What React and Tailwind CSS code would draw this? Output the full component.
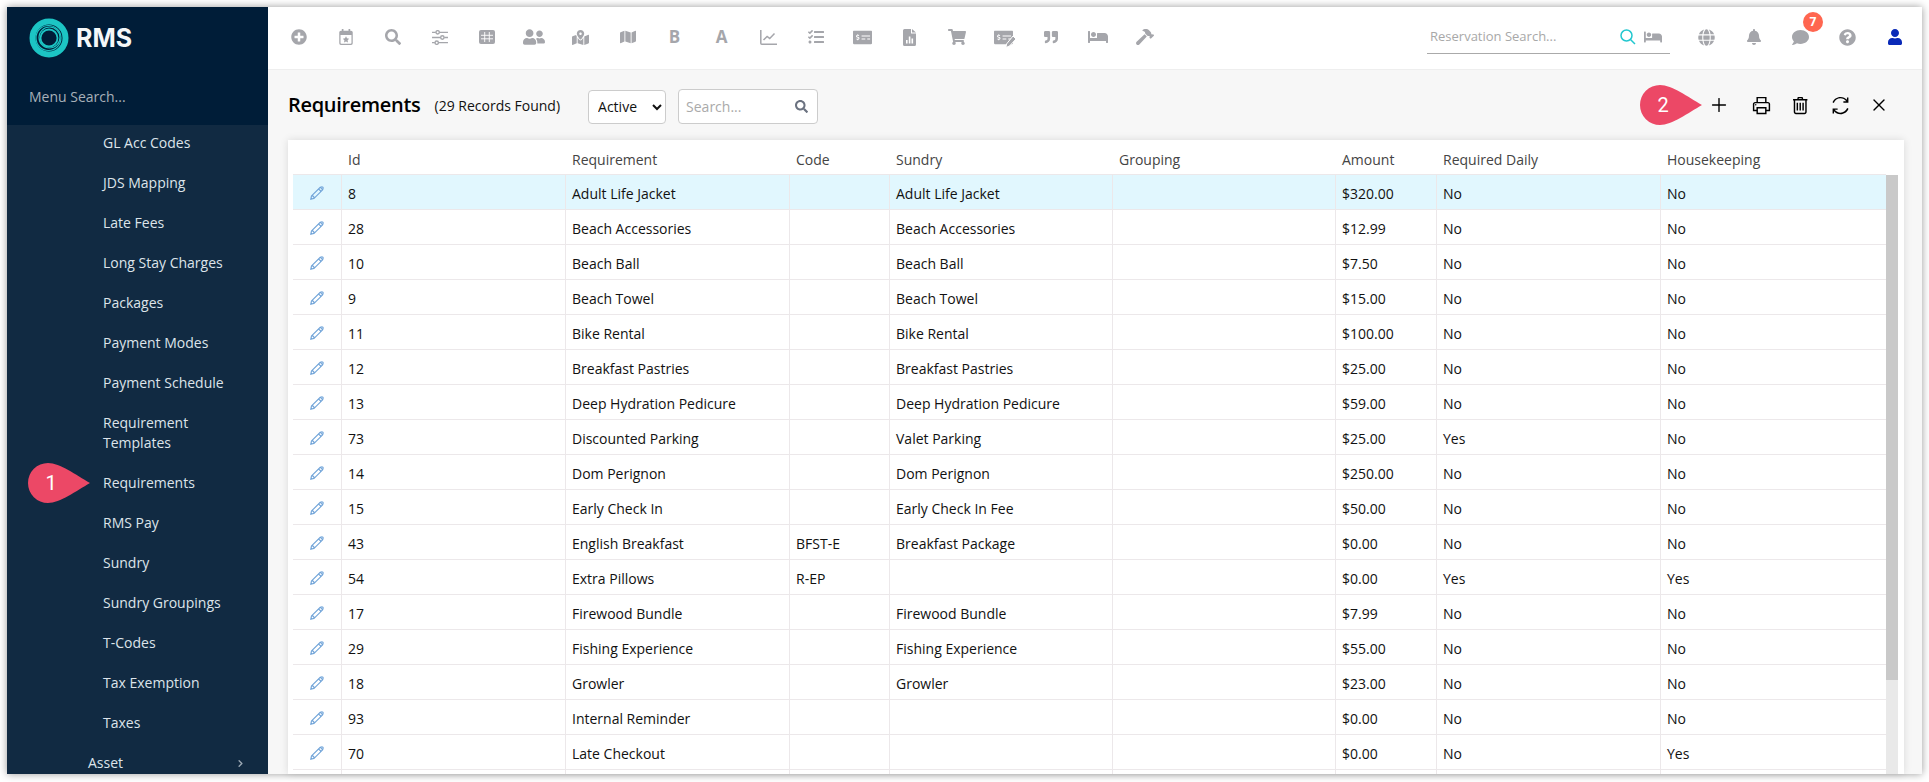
import { Plus, X, ChevronRight } from "lucide-react";
import {
  FaPlusCircle, FaSearch, FaUserFriends, FaMapMarkedAlt, FaMap, FaTasks, FaMoneyCheckAlt,
  FaShoppingCart, FaQuoteRight, FaBed, FaHammer, FaGlobe, FaBell, FaComment, FaQuestionCircle, FaUser,
} from "react-icons/fa";
import { LiaPencilAltSolid, LiaPrintSolid, LiaTrashAltSolid, LiaSyncSolid } from "react-icons/lia";

const menuItems = [
  "GL Acc Codes", "JDS Mapping", "Late Fees", "Long Stay Charges", "Packages", "Payment Modes", "Payment Schedule",
  "Requirement Templates", "Requirements", "RMS Pay", "Sundry", "Sundry Groupings", "T-Codes", "Tax Exemption", "Taxes",
];

const rows = [
  ["8", "Adult Life Jacket", "", "Adult Life Jacket", "$320.00", "No", "No"],
  ["28", "Beach Accessories", "", "Beach Accessories", "$12.99", "No", "No"],
  ["10", "Beach Ball", "", "Beach Ball", "$7.50", "No", "No"],
  ["9", "Beach Towel", "", "Beach Towel", "$15.00", "No", "No"],
  ["11", "Bike Rental", "", "Bike Rental", "$100.00", "No", "No"],
  ["12", "Breakfast Pastries", "", "Breakfast Pastries", "$25.00", "No", "No"],
  ["13", "Deep Hydration Pedicure", "", "Deep Hydration Pedicure", "$59.00", "No", "No"],
  ["73", "Discounted Parking", "", "Valet Parking", "$25.00", "Yes", "No"],
  ["14", "Dom Perignon", "", "Dom Perignon", "$250.00", "No", "No"],
  ["15", "Early Check In", "", "Early Check In Fee", "$50.00", "No", "No"],
  ["43", "English Breakfast", "BFST-E", "Breakfast Package", "$0.00", "No", "No"],
  ["54", "Extra Pillows", "R-EP", "", "$0.00", "Yes", "Yes"],
  ["17", "Firewood Bundle", "", "Firewood Bundle", "$7.99", "No", "No"],
  ["29", "Fishing Experience", "", "Fishing Experience", "$55.00", "No", "No"],
  ["18", "Growler", "", "Growler", "$23.00", "No", "No"],
  ["93", "Internal Reminder", "", "", "$0.00", "No", "No"],
  ["70", "Late Checkout", "", "", "$0.00", "No", "Yes"],
  ["", "", "", "", "", "", ""],
];

function CalendarStar() {
  return (
    <svg width="14" height="16" viewBox="0 0 16 19" fill="#a5a6ab">
      <path d="M3 0h2v3H3zM11 0h2v3h-2z" />
      <path fillRule="evenodd" d="M2 2h12a2 2 0 0 1 2 2v13a2 2 0 0 1-2 2H2a2 2 0 0 1-2-2V4a2 2 0 0 1 2-2zm-.5 5v9.500c0 .6.4 1 1 1h11c.6 0 1-.4 1-1V7z" />
      <path d="M8 8.700l1.200 2.400 2.600.4-1.900 1.800.5 2.600L8 14.700l-2.400 1.200.5-2.600-1.900-1.800 2.600-.4z" />
    </svg>
  );
}

function SlidersIcon() {
  return (
    <svg width="16" height="15" viewBox="0 0 17 16" fill="none" stroke="#a5a6ab" strokeWidth="1.500">
      <path d="M0 2.500h4M8 2.500h9M0 8h9M13 8h4M0 13.500h3M7 13.500h10" />
      <circle cx="6" cy="2.500" r="1.800" />
      <circle cx="11" cy="8" r="1.800" />
      <circle cx="5" cy="13.500" r="1.800" />
    </svg>
  );
}

function GridIcon() {
  return (
    <svg width="16" height="14" viewBox="0 0 16 14">
      <rect width="16" height="14" rx="2" fill="#a5a6ab" />
      <path d="M5.700 2v10M10.300 2v10M2 5.300h12M2 8.800h12" stroke="#fff" strokeWidth="0.900" />
    </svg>
  );
}

function ChartIcon() {
  return (
    <svg width="17" height="15" viewBox="0 0 17 15" fill="none" stroke="#a5a6ab" strokeWidth="1.500">
      <path d="M.8 0v13.200c0 .6.4 1 1 1H17" />
      <path d="M3.500 10l3.600-3.600 2.600 2L14.500 3.500" />
    </svg>
  );
}

function FileChart() {
  return (
    <svg width="13" height="17" viewBox="0 0 13 17">
      <path d="M1.500 0H8v4.500h5v11a1.500 1.500 0 0 1-1.500 1.500h-10A1.500 1.500 0 0 1 0 15.500V1.500A1.500 1.500 0 0 1 1.500 0zM9 0l4 3.500H9z" fill="#a5a6ab" />
      <path d="M3 11h1.600v3.500H3zM5.800 7.500h1.600v7H5.800zM8.500 9.500h1.600v5H8.500z" fill="#fff" />
    </svg>
  );
}

function CheckEdit() {
  return (
    <span className="relative flex">
      <FaMoneyCheckAlt size={19} color="#a5a6ab" />
      <svg className="absolute right-[-3px] bottom-[-1px]" width="11" height="12" viewBox="0 0 11 12">
        <path d="M8 0l3 3-6.500 7L1 11.500 1.500 8z" fill="#a5a6ab" stroke="#fff" strokeWidth="1" />
      </svg>
    </span>
  );
}

const gray = "#a5a6ab";
const toolbarIcons = [
  <FaPlusCircle size={16} color={gray} />,
  <CalendarStar />,
  <FaSearch size={16} color={gray} />,
  <SlidersIcon />,
  <GridIcon />,
  <FaUserFriends size={22} color={gray} />,
  <FaMapMarkedAlt size={17} color={gray} />,
  <FaMap size={16} color={gray} />,
  <span className="text-[17px] font-bold text-[#a5a6ab]">B</span>,
  <span className="text-[17px] font-bold text-[#a5a6ab]">A</span>,
  <ChartIcon />,
  <FaTasks size={16} color={gray} />,
  <FaMoneyCheckAlt size={19} color={gray} />,
  <FileChart />,
  <FaShoppingCart size={18} color={gray} />,
  <CheckEdit />,
  <FaQuoteRight size={14} color={gray} />,
  <FaBed size={20} color={gray} />,
  <FaHammer size={18} color={gray} />,
];

function Logo() {
  return (
    <svg width="40" height="40" viewBox="0 0 40 40" fill="none" stroke="#1cc5c4">
      <circle cx="20" cy="20" r="16.500" strokeWidth="6" />
      <circle cx="19.500" cy="20" r="12.500" strokeWidth="1.200" />
      <circle cx="20.500" cy="19.500" r="10.500" strokeWidth="1.200" />
      <circle cx="20" cy="20" r="8.500" strokeWidth="1.800" />
    </svg>
  );
}

function Callout({ label, className }) {
  return (
    <div className={`absolute h-[40px] w-[62px] ${className}`}>
      <svg width="62" height="40" viewBox="0 0 62 40">
        <path d="M20 0C32 0 48 12 62 20 48 28 32 40 20 40A20 20 0 0 1 20 0z" fill="#ec4866" />
      </svg>
      <span className="absolute left-0 top-0 w-[46px] text-center text-[20px] leading-[40px] font-['Roboto',sans-serif] text-white">{label}</span>
    </div>
  );
}

function Sidebar() {
  return (
    <aside className="flex w-[261px] shrink-0 flex-col overflow-hidden bg-[#112a42]">
      <div className="h-[118px] shrink-0 bg-[#001d38] pl-[22px]">
        <div className="flex items-center gap-[7px] pt-[11px]">
          <Logo />
          <span className="text-[25px] leading-[40px] font-bold font-['Inter',sans-serif] text-[#f4f7f8]">RMS</span>
        </div>
        <input
          placeholder="Menu Search..."
          className="mt-[29px] w-[220px] bg-transparent text-[14px] leading-[20px] text-white outline-none placeholder:text-[#a7b0b8]"
        />
      </div>
      <ul className="-mt-[2px] text-[14px] leading-[20px] text-[#dde4ea]">
        {menuItems.map((item) => (
          <li key={item} className="relative py-[10px] pl-[96px] pr-[40px]">
            {item}
            {item === "Requirements" && <Callout label="1" className="left-[21px] top-0" />}
          </li>
        ))}
        <li className="flex items-center justify-between py-[10px] pl-[81px] pr-[22px]">
          Asset
          <ChevronRight size={11} strokeWidth={3} color="#9aa7b3" />
        </li>
      </ul>
    </aside>
  );
}

function TopBar() {
  return (
    <header className="flex h-[63px] shrink-0 items-center border-b border-[#eeeeee] bg-white pb-[2px] pl-[7px] pr-[4px]">
      {toolbarIcons.map((icon, i) => (
        <div key={i} className="flex h-[30px] w-[47px] items-center justify-center">{icon}</div>
      ))}
      <div className="ml-auto flex h-[33px] w-[243px] items-center border-b border-[#aaaaaa] pl-[3px] pr-[8px]">
        <input
          placeholder="Reservation Search..."
          className="min-w-0 flex-1 bg-transparent text-[13px] outline-none placeholder:text-[#a8a8a8]"
        />
        <svg width="16" height="16" viewBox="0 0 16 16" fill="none" stroke="#22c7cf" strokeWidth="1.500">
          <circle cx="6.500" cy="6.500" r="5.500" />
          <path d="M10.500 10.500L15 15" />
        </svg>
        <FaBed size={18} color={gray} className="ml-[8px]" />
      </div>
      <div className="ml-[13px] flex items-center">
        <div className="flex w-[47px] justify-center"><FaGlobe size={17} color={gray} /></div>
        <div className="flex w-[47px] justify-center"><FaBell size={16} color={gray} /></div>
        <div className="relative flex w-[47px] justify-center">
          <FaComment size={17} color={gray} />
          <span className="absolute left-[26px] -top-[17px] flex h-[20px] w-[20px] items-center justify-center rounded-full bg-[#ff6650] text-[12px] font-bold text-white">7</span>
        </div>
        <div className="flex w-[47px] justify-center"><FaQuestionCircle size={17} color={gray} /></div>
        <div className="flex w-[47px] justify-center"><FaUser size={16} color="#0a2ab8" /></div>
      </div>
    </header>
  );
}

function PageHeader() {
  return (
    <div className="relative flex h-[70px] shrink-0 items-center">
      <h1 className="text-[20px] font-semibold tracking-[-0.3px] text-black">Requirements</h1>
      <span className="ml-[14px] text-[14px] text-[#111]">(29 Records Found)</span>
      <select
        defaultValue="Active"
        className="ml-[28px] mt-[3px] h-[34px] w-[78px] rounded-[4px] border border-[#cccccc] bg-white pl-[5px] text-[14px] text-[#111]"
      >
        <option>Active</option>
        <option>Inactive</option>
      </select>
      <div className="ml-[12px] mt-[3px] flex h-[35px] w-[140px] items-center rounded-[4px] border border-[#cccccc] bg-white pl-[7px] pr-[9px]">
        <input placeholder="Search..." className="min-w-0 flex-1 bg-transparent text-[14px] outline-none placeholder:text-[#aaaaaa]" />
        <FaSearch size={13} color="#6b7280" />
      </div>
      <div className="ml-auto flex items-center pr-[7px] text-black">
        <div className="flex w-[48px] justify-center"><Plus size={22} strokeWidth={1.500} /></div>
        <div className="flex w-[36px] justify-center"><LiaPrintSolid size={23} /></div>
        <div className="flex w-[40px] justify-center"><LiaTrashAltSolid size={23} /></div>
        <div className="flex w-[42px] justify-center"><LiaSyncSolid size={23} /></div>
        <div className="flex w-[36px] justify-center"><X size={20} strokeWidth={1.600} /></div>
      </div>
      <Callout label="2" className="left-[1352px] top-[15px]" />
    </div>
  );
}

function RequirementsTable() {
  const headers = ["Id", "Requirement", "Code", "Sundry", "Grouping", "Amount", "Required Daily", "Housekeeping"];
  const cell = "border-b border-r border-[#ece8ea] px-[6px] pt-[3px] font-normal";
  return (
    <div className="flex min-h-0 flex-1 overflow-hidden bg-white pl-[5px] pr-[6px] shadow-[0_0_8px_rgba(0,0,0,0.12)]">
      <table className="h-fit w-[1593px] shrink-0 table-fixed border-separate border-spacing-0 text-left text-[14px] text-[#111]">
        <colgroup>
          <col className="w-[49px]" />
          <col className="w-[224px]" />
          <col className="w-[224px]" />
          <col className="w-[100px]" />
          <col className="w-[223px]" />
          <col className="w-[223px]" />
          <col className="w-[101px]" />
          <col className="w-[224px]" />
          <col />
        </colgroup>
        <thead>
          <tr className="h-[35px] text-[#444]">
            <th className="border-b border-[#ece8ea]" />
            {headers.map((h) => (
              <th key={h} className="border-b border-[#ece8ea] px-[6px] pt-[4px] font-medium">{h}</th>
            ))}
          </tr>
        </thead>
        <tbody>
          {rows.map((r, i) => (
            <tr key={i} className={`h-[35px] ${i === 0 ? "bg-[#e1f7fe]" : "bg-white"}`}>
              <td className="border-b border-r border-[#ece8ea] pt-[1px] text-center">
                {r[0] && <LiaPencilAltSolid size={18} color="#6fa3d8" className="mx-auto" />}
              </td>
              <td className={cell}>{r[0]}</td>
              <td className={cell}>{r[1]}</td>
              <td className={cell}>{r[2]}</td>
              <td className={cell}>{r[3]}</td>
              <td className={cell}></td>
              <td className={cell}>{r[4]}</td>
              <td className={cell}>{r[5]}</td>
              <td className="border-b border-[#ece8ea] px-[6px] pt-[3px]">{r[6]}</td>
            </tr>
          ))}
        </tbody>
      </table>
      <div className="mt-[35px] w-[12px] shrink-0 bg-[#e9e9e9]">
        <div className="h-[505px] bg-[#c9c9c9]" />
      </div>
    </div>
  );
}

export default function App() {
  return (
    <div className="h-screen w-full overflow-hidden bg-white pb-[8px] pl-[7px] pr-[7px] pt-[7px] font-['Open_Sans',sans-serif]">
      <div className="flex h-full shadow-[0_0_8px_rgba(0,0,0,0.4)]">
        <Sidebar />
        <main className="flex min-w-0 flex-1 flex-col bg-[#f7f7f7]">
          <TopBar />
          <div className="flex min-h-0 flex-1 flex-col pl-[20px] pr-[18px]">
            <PageHeader />
            <RequirementsTable />
          </div>
        </main>
      </div>
    </div>
  );
}
